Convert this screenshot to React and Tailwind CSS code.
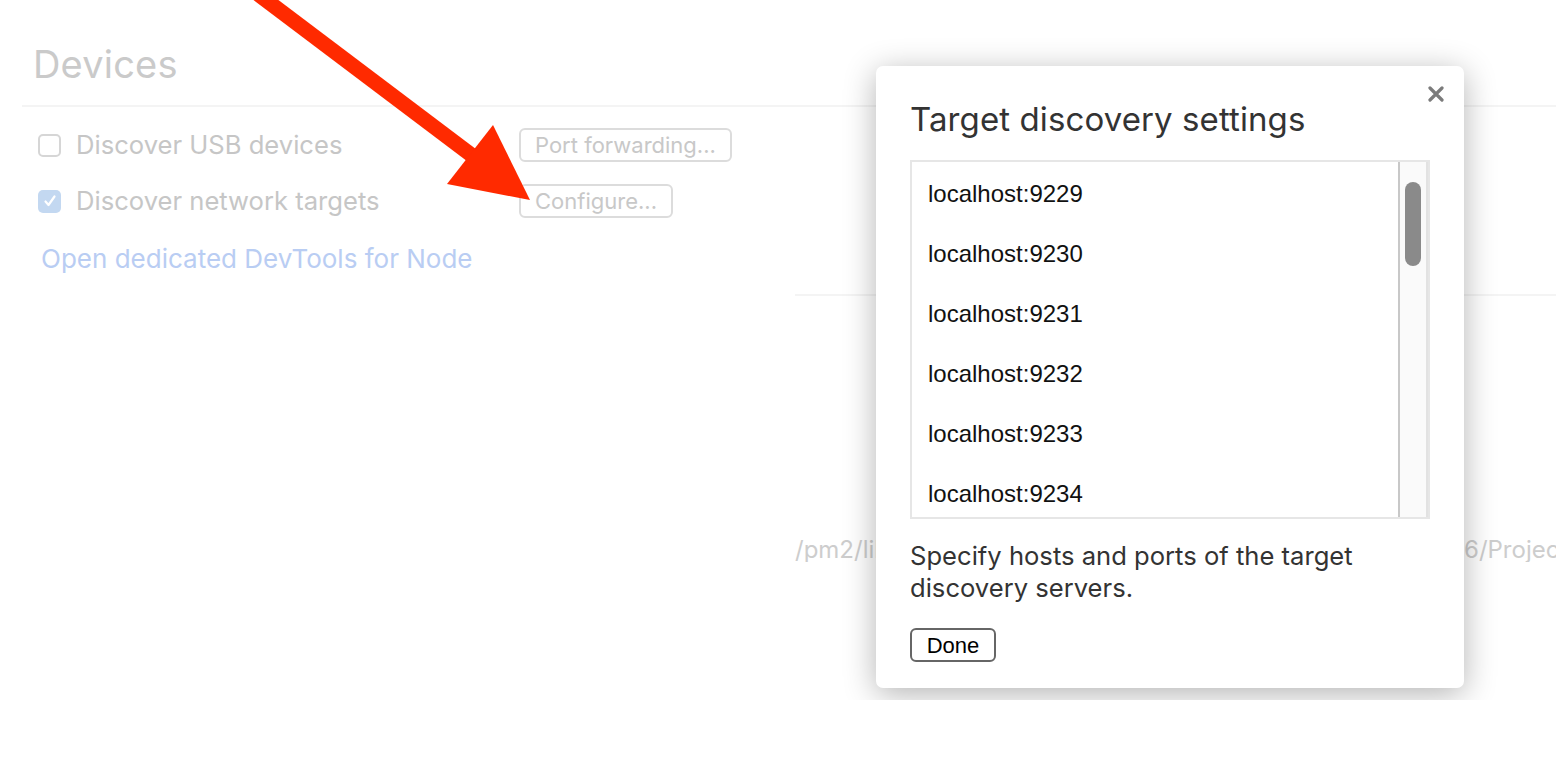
import React from 'react'

const HOSTS = ['localhost:9229', 'localhost:9230', 'localhost:9231', 'localhost:9232', 'localhost:9233', 'localhost:9234']

function Checkbox({ checked }) {
  if (checked) {
    return (
      <span className="w-[23px] h-[23px] rounded-[5px] bg-[#c3d8f1] flex items-center justify-center shrink-0">
        <svg width="14" height="14" viewBox="0 0 14 14">
          <path d="M2.5 7.5 L5.5 11 L11.5 2.5" fill="none" stroke="#fff" strokeWidth="2.2" strokeLinecap="round" strokeLinejoin="round" />
        </svg>
      </span>
    )
  }
  return <span className="w-[23px] h-[23px] rounded-[5px] border-2 border-[#d6d6d6] bg-white shrink-0" />
}

function FadedButton({ children }) {
  return (
    <span className="h-[34px] px-[14px] flex items-center border-2 border-[#dcdcdc] rounded-[6px] text-[22px] text-[#c8c8c8] leading-none">
      {children}
    </span>
  )
}

export default function App() {
  return (
    <div className="w-full h-[760px] bg-white" style={{ fontFamily: 'Inter, "Noto Sans", sans-serif' }}>
      <div className="relative w-full h-[700px] overflow-hidden bg-white">
        {/* faded page behind the dialog */}
        <div className="ml-[22px] h-[107px] border-b-2 border-[#f4f4f4] pl-[11px] pt-[45px]">
          <h1 className="text-[38px] leading-none text-[#cacaca] tracking-[0.2px]">Devices</h1>
        </div>
        <div className="flex">
          <div className="w-[795px] shrink-0 pl-[38px] pt-[21px]">
            <div className="flex items-center h-[34px]">
              <div className="w-[481px] flex items-center gap-[15px]">
                <Checkbox />
                <span className="text-[25.6px] text-[#c6c6c6] leading-none">Discover USB devices</span>
              </div>
              <FadedButton>Port forwarding...</FadedButton>
            </div>
            <div className="flex items-center h-[34px] mt-[22px]">
              <div className="w-[481px] flex items-center gap-[15px]">
                <Checkbox checked />
                <span className="text-[25.6px] text-[#c6c6c6] leading-none">Discover network targets</span>
              </div>
              <FadedButton>Configure...</FadedButton>
            </div>
            <div className="mt-[28px] pl-[3px] text-[26px] text-[#b9cdf3] leading-none">Open dedicated DevTools for Node</div>
          </div>
          <div className="flex-1 min-w-0">
            <div className="h-[189px] border-b-2 border-[#f4f4f4]" />
            <div className="pt-[242px] flex whitespace-nowrap text-[24px] text-[#cdcdcd] leading-none">
              <span className="w-[81px] overflow-hidden">/pm2/lib/</span>
              <span className="ml-auto w-[92px] overflow-hidden">6/Projects</span>
            </div>
          </div>
        </div>

        {/* dialog */}
        <div className="absolute left-[876px] top-[66px] w-[588px] h-[622px] bg-white rounded-[7px] shadow-[0_6px_32px_rgba(0,0,0,0.3)] px-[34px] pt-[37px]">
          <button className="absolute right-[20px] top-[20px] w-[16px] h-[16px] flex items-center justify-center">
            <svg width="16" height="16" viewBox="0 0 16 16">
              <path d="M2 2 L14 14 M14 2 L2 14" stroke="#7b7b7b" strokeWidth="3.2" strokeLinecap="round" />
            </svg>
          </button>
          <h2 className="text-[33px] leading-none text-[#333] tracking-[0.1px]">Target discovery settings</h2>
          <div className="mt-[24px] h-[359px] border-2 border-[#e6e6e6] flex overflow-hidden">
            <div className="flex-1 pt-[2px]" style={{ fontFamily: '"Liberation Sans", Arial, sans-serif' }}>
              {HOSTS.map(h => (
                <div key={h} className="h-[60px] flex items-center pl-[16px] text-[24px] text-[#111]">{h}</div>
              ))}
            </div>
            <div className="w-[30px] shrink-0 border-l-2 border-[#c8c8c8] bg-[#fafafa] border-r-2 border-r-[#e2e2e2] pt-[20px] flex justify-center">
              <div className="w-[16px] h-[84px] rounded-full bg-[#8a8a8a]" />
            </div>
          </div>
          <p className="mt-[21px] text-[25.6px] leading-[32px] text-[#333]">Specify hosts and ports of the target discovery servers.</p>
          <button
            className="mt-[24px] w-[86px] h-[34px] border-2 border-[#666] rounded-[6px] bg-white text-[22px] text-black flex items-center justify-center"
            style={{ fontFamily: '"Liberation Sans", Arial, sans-serif' }}
          >
            Done
          </button>
        </div>

        {/* annotation arrow */}
        <svg className="absolute left-0 top-0" width="600" height="240" viewBox="0 0 600 240">
          <line x1="258" y1="-6" x2="478" y2="160" stroke="#ff2a00" strokeWidth="15" />
          <polygon points="530,200 493,125 447,184" fill="#ff2a00" />
        </svg>
      </div>
    </div>
  )
}
